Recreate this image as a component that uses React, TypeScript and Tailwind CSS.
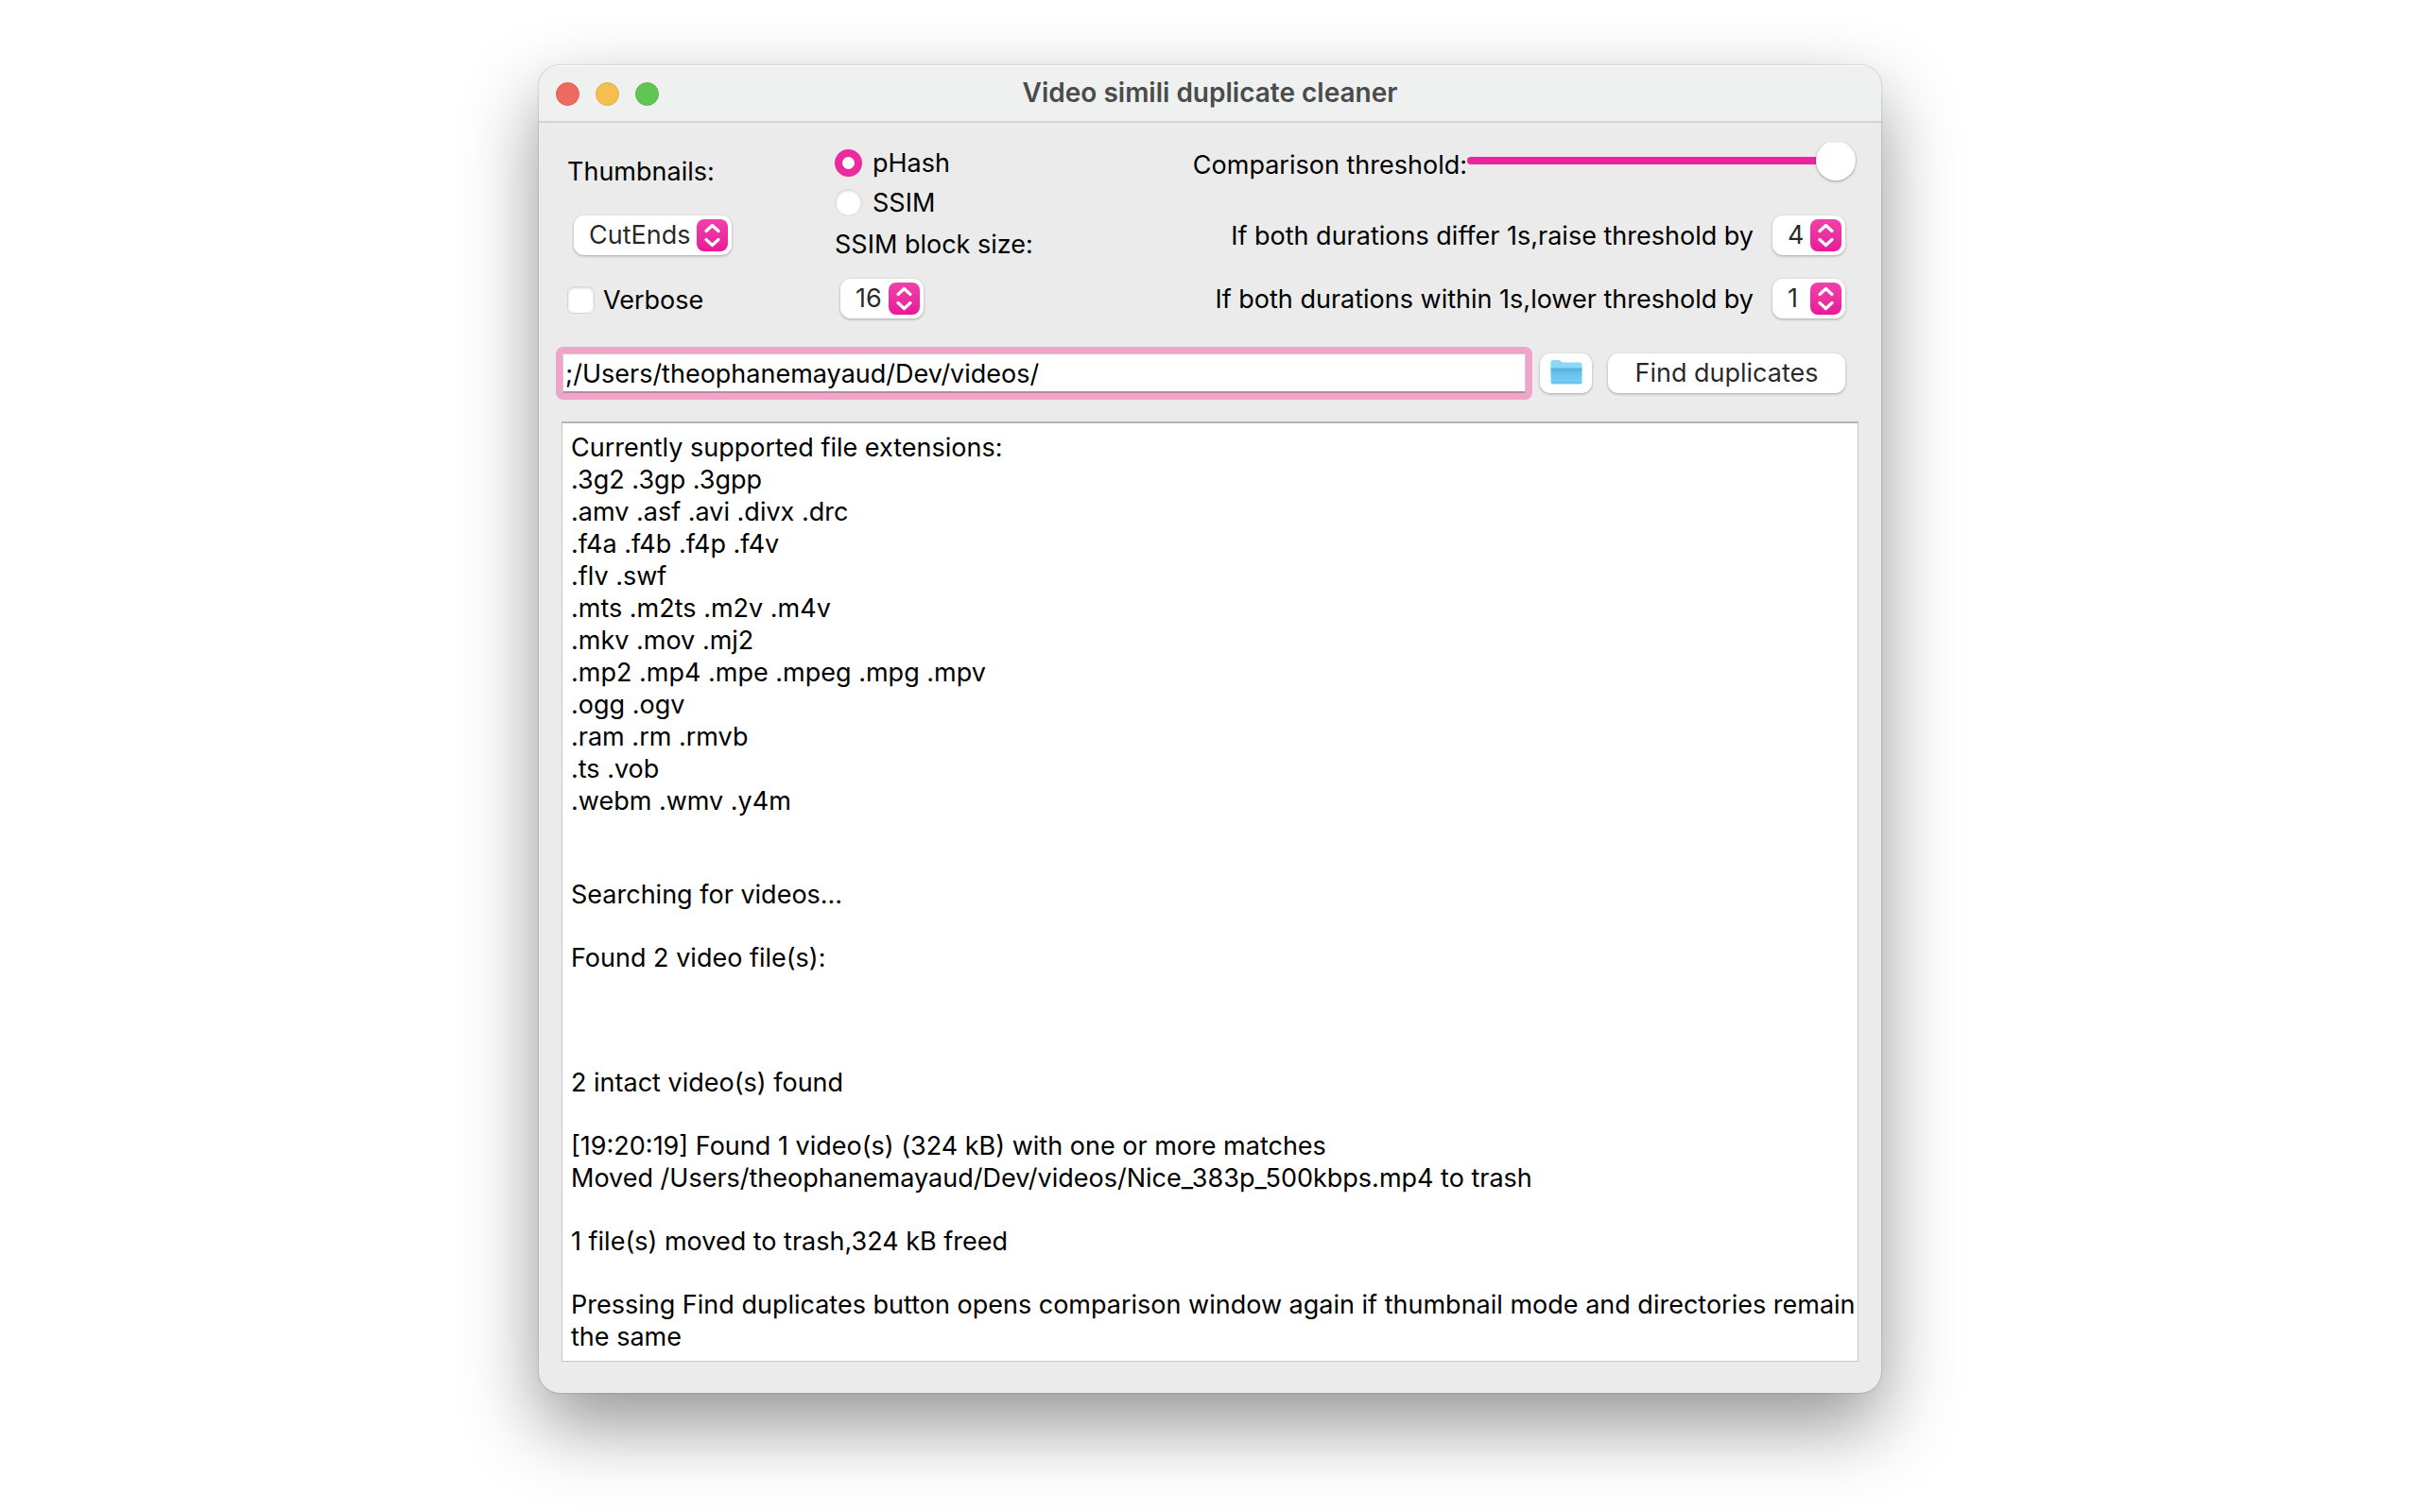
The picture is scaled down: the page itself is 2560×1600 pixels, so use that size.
import { useState } from "react";
import type { ReactNode } from "react";

const extensions = [
  ".3g2 .3gp .3gpp",
  ".amv .asf .avi .divx .drc",
  ".f4a .f4b .f4p .f4v",
  ".flv .swf",
  ".mts .m2ts .m2v .m4v",
  ".mkv .mov .mj2",
  ".mp2 .mp4 .mpe .mpeg .mpg .mpv",
  ".ogg .ogv",
  ".ram .rm .rmvb",
  ".ts .vob",
  ".webm .wmv .y4m",
];

function PopUp({ id, label, options, className }: { id: string; label?: string; options: string[]; className: string }) {
  return (
    <div className={`relative h-[42px] ${className}`}>
      <select
        id={id}
        aria-label={label}
        className="h-full w-full appearance-none rounded-[11px] bg-white pl-4 leading-[34px] text-black/85 shadow-[0_1px_3px_rgba(0,0,0,0.3)] outline-none"
      >
        {options.map((o) => (
          <option key={o}>{o}</option>
        ))}
      </select>
      <span className="pointer-events-none absolute top-1 right-1 flex h-[34px] w-[33px] items-center justify-center rounded-[8px] bg-linear-to-b from-[#f040ab] to-[#e91797]">
        <svg viewBox="0 0 33 34" className="h-full w-full" fill="none" stroke="white" strokeWidth="3.2" strokeLinecap="round" strokeLinejoin="round">
          <path d="M10 12.5 L16.5 6.5 L23 12.5 M10 21.5 L16.5 27.5 L23 21.5" />
        </svg>
      </span>
    </div>
  );
}

function Radio({ label, checked, onChange }: { label: string; checked: boolean; onChange: () => void }) {
  return (
    <label className="flex h-[34px] items-center gap-[11px]">
      <input
        type="radio"
        name="algorithm"
        checked={checked}
        onChange={onChange}
        className="size-[29px] appearance-none rounded-full border border-[#d6d6d6] bg-white shadow-[inset_0_1px_3px_rgba(0,0,0,0.15)] checked:border-[8px] checked:border-[#ec2a9f] checked:shadow-none"
      />
      <span className="pt-[2px]">{label}</span>
    </label>
  );
}

function FolderIcon() {
  return (
    <svg viewBox="0 0 34 28" className="h-7 w-[34px]">
      <defs>
        <linearGradient id="folder" x1="0" y1="0" x2="0" y2="1">
          <stop offset="0" stopColor="#55aedb" />
          <stop offset="0.35" stopColor="#68c1ec" />
          <stop offset="1" stopColor="#7bd0f8" />
        </linearGradient>
      </defs>
      <path d="M0.5 10V3.5Q0.5 1 3 1H8.5Q10 1 11 2L12 3Q12.6 3.5 14 3.5H31Q33.5 3.5 33.5 6V12H0.5Z" fill="#8bd7fa" />
      <path d="M0.5 9.5H33.5V24Q33.5 26.5 31 26.5H3Q0.5 26.5 0.5 24Z" fill="url(#folder)" />
      <path d="M1 24.8H33" stroke="#5fb5de" strokeWidth="1" />
    </svg>
  );
}

function Paragraph({ className = "", children }: { className?: string; children: ReactNode }) {
  return <p className={className}>{children}</p>;
}

export default function App() {
  const [algorithm, setAlgorithm] = useState("pHash");

  return (
    <div className="min-h-screen bg-white px-4 pt-[69px] pb-[126px] font-['Inter','Liberation_Sans',sans-serif] text-[27px] leading-[34px] text-black">
      <main className="mx-auto flex w-full max-w-[1420px] flex-col overflow-hidden rounded-[22px] bg-[#ebebeb] shadow-[0_0_2px_rgba(0,0,0,0.35),0_34px_80px_rgba(0,0,0,0.42)]">
        <header className="grid h-[61px] grid-cols-[1fr_auto_1fr] items-center border-t border-b-2 border-t-white border-b-[#d3d5d4] bg-[#eff1f0] px-[18px]">
          <div className="flex gap-[17px]">
            <button aria-label="Close" className="size-[25px] rounded-full border border-[#e0604f] bg-[#ec6a5e]" />
            <button aria-label="Minimize" className="size-[25px] rounded-full border border-[#e6ae42] bg-[#f5bf4f]" />
            <button aria-label="Zoom" className="size-[25px] rounded-full border border-[#56b748] bg-[#61c554]" />
          </div>
          <h1 className="pb-[2px] text-[28px] font-semibold text-[#4a4c4b]">Video simili duplicate cleaner</h1>
        </header>

        <section className="flex">
          <div className="w-[313px] pt-[35px] pl-[30px]">
            <label htmlFor="thumbnails" className="block">
              Thumbnails:
            </label>
            <PopUp id="thumbnails" options={["CutEnds"]} className="mt-[29px] ml-[7px] w-[167px]" />
            <label className="mt-[30px] flex h-[34px] items-center gap-[9px]">
              <input
                type="checkbox"
                className="size-[29px] appearance-none rounded-[7px] border border-[#d6d6d6] bg-white shadow-[inset_0_1px_3px_rgba(0,0,0,0.15)] checked:bg-[#ec2a9f]"
              />
              <span className="pt-[2px]">Verbose</span>
            </label>
          </div>

          <div className="pt-[25px]">
            <Radio label="pHash" checked={algorithm === "pHash"} onChange={() => setAlgorithm("pHash")} />
            <div className="h-2" />
            <Radio label="SSIM" checked={algorithm === "SSIM"} onChange={() => setAlgorithm("SSIM")} />
            <label htmlFor="block-size" className="mt-[11px] block">
              SSIM block size:
            </label>
            <PopUp id="block-size" options={["16"]} className="mt-[19px] ml-[6px] w-[88px]" />
          </div>

          <div className="ml-auto flex flex-col items-end pt-[21px] pr-[38px]">
            <div className="-mr-[13px] flex h-[46px] items-center">
              <label htmlFor="threshold" className="pt-[2px]">
                Comparison threshold:
              </label>
              <div className="h-[46px] w-[413px] overflow-hidden pr-[2px]">
                <input
                  id="threshold"
                  type="range"
                  defaultValue={100}
                  className="-mt-[2px] block h-[42px] w-full appearance-none bg-transparent [&::-webkit-slider-runnable-track]:h-2 [&::-webkit-slider-runnable-track]:rounded-full [&::-webkit-slider-runnable-track]:bg-[#ec259e] [&::-webkit-slider-thumb]:-mt-[17px] [&::-webkit-slider-thumb]:size-[42px] [&::-webkit-slider-thumb]:appearance-none [&::-webkit-slider-thumb]:rounded-full [&::-webkit-slider-thumb]:bg-white [&::-webkit-slider-thumb]:shadow-[0_1px_3px_rgba(0,0,0,0.35)]"
                />
              </div>
            </div>
            <div className="mt-[31px] flex items-center gap-[20px]">
              <label htmlFor="raise" className="pt-[2px]">
                If both durations differ 1s,raise threshold by
              </label>
              <PopUp id="raise" options={["4"]} className="w-[77px]" />
            </div>
            <div className="mt-[25px] flex items-center gap-[20px]">
              <label htmlFor="lower" className="pt-[2px]">
                If both durations within 1s,lower threshold by
              </label>
              <PopUp id="lower" options={["1"]} className="w-[77px]" />
            </div>
          </div>
        </section>

        <form className="mt-[30px] flex items-center pr-[38px] pl-[18px]" onSubmit={(e) => e.preventDefault()}>
          <div className="min-w-0 flex-1 rounded-[8px] bg-[#eea5c9] p-[7px]">
            <input
              type="text"
              aria-label="Folders to search"
              defaultValue=";/Users/theophanemayaud/Dev/videos/"
              className="block h-[42px] w-full border border-b-2 border-[#dcc3cf] border-b-[#b98aa0] bg-white px-[2px] pt-[2px] outline-none"
            />
          </div>
          <button
            type="button"
            aria-label="Choose folder"
            className="ml-2 flex h-[42px] w-[55px] items-center justify-center rounded-[11px] bg-white pb-[3px] shadow-[0_1px_3px_rgba(0,0,0,0.3)]"
          >
            <FolderIcon />
          </button>
          <button type="submit" className="ml-[17px] h-[42px] w-[251px] rounded-[11px] bg-white text-black/85 shadow-[0_1px_3px_rgba(0,0,0,0.3)]">
            Find duplicates
          </button>
        </form>

        <div
          role="log"
          className="mx-6 mt-[23px] mb-[33px] border border-t-2 border-[#c6c6c6] border-t-[#b4b4b4] bg-white pt-[9px] pb-[8px] pl-[9px]"
        >
          <Paragraph>Currently supported file extensions:</Paragraph>
          {extensions.map((line) => (
            <Paragraph key={line}>{line}</Paragraph>
          ))}
          <Paragraph className="mt-[65px]">Searching for videos...</Paragraph>
          <Paragraph className="mt-[33px]">Found 2 video file(s):</Paragraph>
          <Paragraph className="mt-[98px]">2 intact video(s) found</Paragraph>
          <Paragraph className="mt-[33px]">[19:20:19] Found 1 video(s) (324 kB) with one or more matches</Paragraph>
          <Paragraph>Moved /Users/theophanemayaud/Dev/videos/Nice_383p_500kbps.mp4 to trash</Paragraph>
          <Paragraph className="mt-[33px]">1 file(s) moved to trash,324 kB freed</Paragraph>
          <Paragraph className="mt-[33px]">
            Pressing Find duplicates button opens comparison window again if thumbnail mode and directories remain the same
          </Paragraph>
        </div>
      </main>
    </div>
  );
}
